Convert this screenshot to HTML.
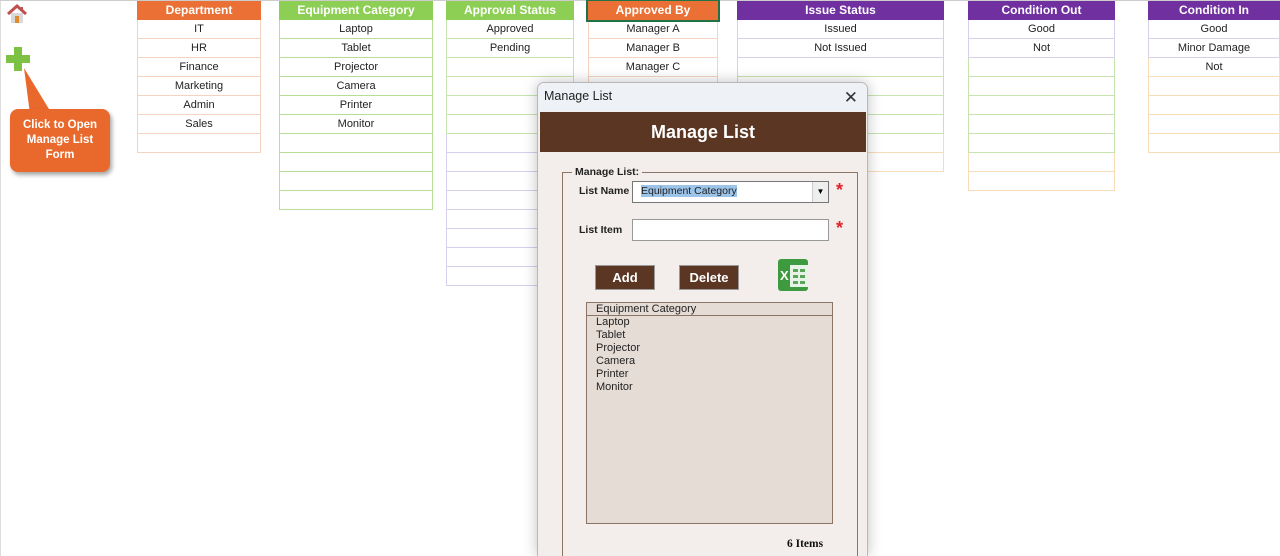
<!DOCTYPE html>
<html><head><meta charset="utf-8"><style>
*{margin:0;padding:0;box-sizing:border-box}
html,body{width:1280px;height:556px;overflow:hidden}
body{background:#fff;font-family:"Liberation Sans",sans-serif;position:relative}
.col{position:absolute;top:1px}
.h{height:19px;color:#fff;font-weight:bold;font-size:12px;text-align:center;line-height:19px}
.r{height:19px;border:1px solid;border-top:none;font-size:11px;text-align:center;line-height:19px;color:#222}
.abs{position:absolute}
</style></head><body>
<div class="abs" style="left:0;top:0;width:1px;height:556px;background:#ddd"></div>
<div class="abs" style="left:0;top:0;width:1280px;height:1px;background:#ccc"></div>
<svg class="abs" style="left:6px;top:4px" width="22" height="20" viewBox="0 0 22 20"><path d="M2 10 L11 2 L20 10" fill="none" stroke="#c0504d" stroke-width="3"/><rect x="5" y="9" width="12" height="10" fill="#d9d9d9"/><rect x="9" y="12" width="4" height="7" fill="#e08a2e"/><rect x="15" y="3" width="2" height="4" fill="#c0504d"/></svg>
<div class="abs" style="left:14px;top:47px;width:8px;height:24px;background:#7dc242"></div>
<div class="abs" style="left:6px;top:55px;width:24px;height:8px;background:#7dc242"></div>
<svg class="abs" style="left:20px;top:68px" width="40" height="48"><polygon points="4,0 32,46 10,46" fill="#e8692b"/></svg>
<div class="abs" style="left:10px;top:109px;width:100px;height:63px;background:#e8692b;border-radius:8px;box-shadow:2px 3px 4px rgba(0,0,0,.35);color:#fff;font-weight:bold;font-size:11.5px;text-align:center;line-height:15px;padding-top:9px">Click to Open<br>Manage List<br>Form</div>

<div class="col" style="left:137px;width:124px"><div class="h" style="background:#ea7035">Department</div>
<div class="r" style="border-color:#f5d3c0">IT</div><div class="r" style="border-color:#f5d3c0">HR</div><div class="r" style="border-color:#f5d3c0">Finance</div><div class="r" style="border-color:#f5d3c0">Marketing</div><div class="r" style="border-color:#f5d3c0">Admin</div><div class="r" style="border-color:#f5d3c0">Sales</div><div class="r" style="border-color:#f5d3c0"></div></div>

<div class="col" style="left:279px;width:154px"><div class="h" style="background:#8dcf55">Equipment Category</div>
<div class="r" style="border-color:#b6df95">Laptop</div><div class="r" style="border-color:#b6df95">Tablet</div><div class="r" style="border-color:#b6df95">Projector</div><div class="r" style="border-color:#b6df95">Camera</div><div class="r" style="border-color:#b6df95">Printer</div><div class="r" style="border-color:#b6df95">Monitor</div><div class="r" style="border-color:#b6df95"></div><div class="r" style="border-color:#b6df95"></div><div class="r" style="border-color:#b6df95"></div><div class="r" style="border-color:#b6df95"></div></div>

<div class="col" style="left:446px;width:128px"><div class="h" style="background:#8dcf55">Approval Status</div>
<div class="r" style="border-color:#c7e3b0">Approved</div><div class="r" style="border-color:#c7e3b0">Pending</div><div class="r" style="border-color:#c7e3b0"></div><div class="r" style="border-color:#c7e3b0"></div><div class="r" style="border-color:#c7e3b0"></div><div class="r" style="border-color:#c7e3b0"></div><div class="r" style="border-color:#d6d0ec"></div><div class="r" style="border-color:#d6d0ec"></div><div class="r" style="border-color:#d6d0ec"></div><div class="r" style="border-color:#d6d0ec"></div><div class="r" style="border-color:#d6d0ec"></div><div class="r" style="border-color:#d6d0ec"></div><div class="r" style="border-color:#d6d0ec"></div><div class="r" style="border-color:#d6d0ec"></div></div>

<div class="col" style="left:588px;width:130px"><div class="h" style="background:#ea7035;outline:2px solid #217346">Approved By</div>
<div class="r" style="border-color:#f5d3c0">Manager A</div><div class="r" style="border-color:#f5d3c0">Manager B</div><div class="r" style="border-color:#f5d3c0">Manager C</div><div class="r" style="border-color:#f5d3c0"></div><div class="r" style="border-color:#f5d3c0"></div><div class="r" style="border-color:#f5d3c0"></div><div class="r" style="border-color:#f5d3c0"></div></div>

<div class="col" style="left:737px;width:207px"><div class="h" style="background:#7030a0">Issue Status</div>
<div class="r" style="border-color:#d6d0ec">Issued</div><div class="r" style="border-color:#d6d0ec">Not Issued</div><div class="r" style="border-color:#c7e3b0"></div><div class="r" style="border-color:#c7e3b0"></div><div class="r" style="border-color:#c7e3b0"></div><div class="r" style="border-color:#c7e3b0"></div><div class="r" style="border-color:#f8dcb8"></div><div class="r" style="border-color:#f8dcb8"></div></div>

<div class="col" style="left:968px;width:147px"><div class="h" style="background:#7030a0">Condition Out</div>
<div class="r" style="border-color:#d6d0ec">Good</div><div class="r" style="border-color:#d6d0ec">Not</div><div class="r" style="border-color:#c7e3b0"></div><div class="r" style="border-color:#c7e3b0"></div><div class="r" style="border-color:#c7e3b0"></div><div class="r" style="border-color:#c7e3b0"></div><div class="r" style="border-color:#c7e3b0"></div><div class="r" style="border-color:#f8dcb8"></div><div class="r" style="border-color:#f8dcb8"></div></div>

<div class="col" style="left:1148px;width:132px"><div class="h" style="background:#7030a0">Condition In</div>
<div class="r" style="border-color:#d6d0ec">Good</div><div class="r" style="border-color:#d6d0ec">Minor Damage</div><div class="r" style="border-color:#f8dcb8">Not</div><div class="r" style="border-color:#f8dcb8"></div><div class="r" style="border-color:#f8dcb8"></div><div class="r" style="border-color:#f8dcb8"></div><div class="r" style="border-color:#f8dcb8"></div></div>

<div class="abs" style="left:537px;top:82px;width:331px;height:474px;background:#f3eeeb;border:1px solid #b8b8b8;border-bottom:none;border-radius:7px 7px 0 0;box-shadow:0 0 14px rgba(0,0,0,.25);overflow:hidden">
 <div style="height:28px;background:#eef1f6;font-size:12.5px;line-height:27px;padding-left:6px;color:#222">Manage List<span style="position:absolute;right:9px;top:1px;font-size:17px;color:#333">✕</span></div>
 <div style="position:absolute;left:2px;top:29px;width:326px;height:40px;background:#5a3623;color:#fff;font-weight:bold;font-size:18px;text-align:center;line-height:40px">Manage List</div>
 <div style="position:absolute;left:24px;top:89px;width:296px;height:400px;border:1px solid #8a7566"></div>
 <div style="position:absolute;left:34px;top:83px;background:#f3eeeb;padding:0 3px;font-size:10.5px;font-weight:bold;color:#222">Manage List:</div>
 <div style="position:absolute;left:41px;top:102px;font-size:10.5px;font-weight:bold;color:#222">List Name</div>
 <div style="position:absolute;left:94px;top:98px;width:197px;height:22px;background:#fff;border:1px solid #777"><span style="position:absolute;left:8px;top:3px;background:#9cc3e8;font-size:10.5px;color:#222">Equipment Category</span><span style="position:absolute;right:0;top:0;width:16px;height:20px;background:#eee;border-left:1px solid #ccc;font-size:8px;text-align:center;line-height:20px">▼</span></div>
 <div style="position:absolute;left:298px;top:97px;color:#e0202a;font-size:18px;font-weight:bold">*</div>
 <div style="position:absolute;left:41px;top:141px;font-size:10.5px;font-weight:bold;color:#222">List Item</div>
 <div style="position:absolute;left:94px;top:136px;width:197px;height:22px;background:#fff;border:1px solid #999"></div>
 <div style="position:absolute;left:298px;top:135px;color:#e0202a;font-size:18px;font-weight:bold">*</div>
 <div style="position:absolute;left:57px;top:182px;width:60px;height:25px;background:#5a3623;border:1px solid #999;color:#fff;font-weight:bold;font-size:13px;text-align:center;line-height:23px">Add</div>
 <div style="position:absolute;left:141px;top:182px;width:60px;height:25px;background:#5a3623;border:1px solid #999;color:#fff;font-weight:bold;font-size:13px;text-align:center;line-height:23px">Delete</div>
 <svg style="position:absolute;left:238px;top:174px" width="36" height="36"><rect x="2" y="2" width="30" height="32" rx="3" fill="#3e9a3e"/><rect x="14" y="8" width="18" height="22" fill="#e8f3e8"/><g fill="#5aa55a"><rect x="17" y="12" width="5" height="3"/><rect x="24" y="12" width="5" height="3"/><rect x="17" y="18" width="5" height="3"/><rect x="24" y="18" width="5" height="3"/><rect x="17" y="24" width="5" height="3"/><rect x="24" y="24" width="5" height="3"/></g><text x="4" y="23" font-family="Liberation Sans" font-weight="bold" font-size="13" fill="#fff">X</text></svg>
 <div style="position:absolute;left:48px;top:219px;width:247px;height:222px;background:#e6dcd6;border:1px solid #8a7566;font-size:11px;color:#222">
  <div style="height:13px;border-bottom:1px solid #8a7566;padding-left:9px;line-height:13px">Equipment Category</div>
  <div style="padding-left:9px;line-height:13px">Laptop<br>Tablet<br>Projector<br>Camera<br>Printer<br>Monitor</div>
 </div>
 <div style="position:absolute;left:249px;top:455px;font-family:'Liberation Serif',serif;font-weight:bold;font-size:11.5px;color:#111">6 Items</div>
</div>
</body></html>
